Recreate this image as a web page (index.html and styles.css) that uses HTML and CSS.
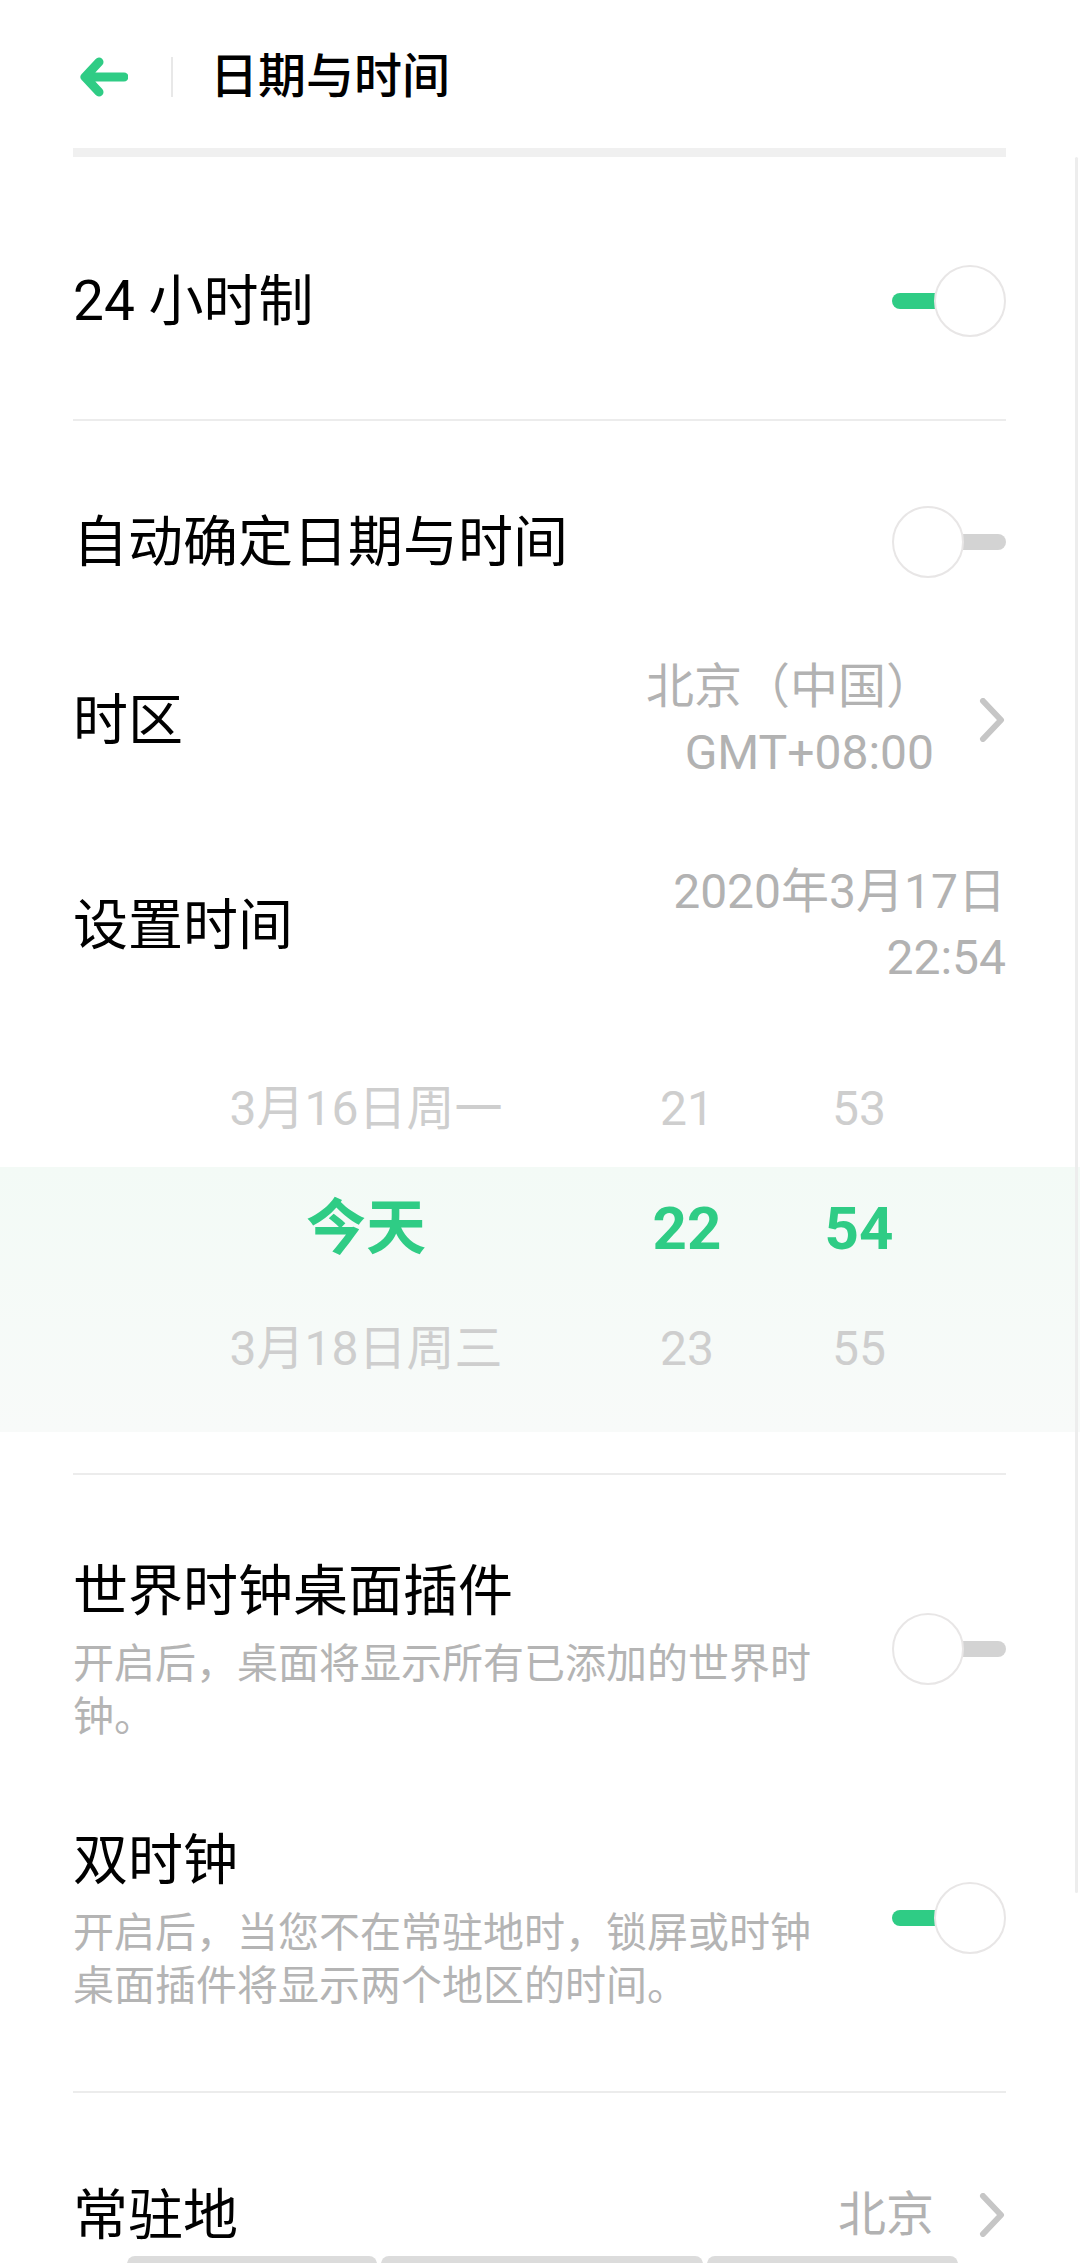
FILE: index.html
```html
<!DOCTYPE html>
<html lang="zh-CN">
<head>
<meta charset="utf-8">
<title>日期与时间</title>
<link rel="stylesheet" href="styles.css">
</head>
<body>
<div class="page">
  <header class="topbar">
    <svg class="back" viewBox="0 0 48 40" aria-hidden="true">
      <path d="M44 20 H5 M19 5 L5 20 L19 35" fill="none" stroke="#2fcc85" stroke-width="9" stroke-linecap="round" stroke-linejoin="round"/>
    </svg>
    <span class="vsep"></span>
    <h1 class="title">日期与时间</h1>
  </header>
  <div class="hbar"></div>

  <section class="row row-24">
    <span class="label">24 小时制</span>
    <span class="switch on"><span class="track"></span><span class="knob"></span></span>
  </section>
  <div class="divider"></div>

  <section class="row row-auto">
    <span class="label">自动确定日期与时间</span>
    <span class="switch off"><span class="knob"></span><span class="track"></span></span>
  </section>

  <section class="row row-tz">
    <span class="label">时区</span>
    <span class="nav">
      <span class="value">北京（中国）<br>GMT+08:00</span>
      <svg class="chev" viewBox="0 0 27 44" aria-hidden="true"><path d="M4 3 L22 22 L4 41" fill="none" stroke="#c6c6c6" stroke-width="6" stroke-linecap="round" stroke-linejoin="round"/></svg>
    </span>
  </section>

  <section class="row row-set">
    <span class="label">设置时间</span>
    <span class="value">2020年3月17日<br>22:54</span>
  </section>

  <section class="picker">
    <div class="prow"><span class="c1">3月16日周一</span><span class="c2">21</span><span class="c3">53</span></div>
    <div class="prow sel"><span class="c1">今天</span><span class="c2">22</span><span class="c3">54</span></div>
    <div class="prow"><span class="c1">3月18日周三</span><span class="c2">23</span><span class="c3">55</span></div>
  </section>
  <div class="divider div-after-picker"></div>

  <section class="item item-world">
    <div class="item-text">
      <div class="item-title">世界时钟桌面插件</div>
      <div class="item-sub">开启后，桌面将显示所有已添加的世界时钟。</div>
    </div>
    <span class="switch off"><span class="knob"></span><span class="track"></span></span>
  </section>

  <section class="item item-dual">
    <div class="item-text">
      <div class="item-title">双时钟</div>
      <div class="item-sub">开启后，当您不在常驻地时，锁屏或时钟桌面插件将显示两个地区的时间。</div>
    </div>
    <span class="switch on"><span class="track"></span><span class="knob"></span></span>
  </section>
  <div class="divider div-home"></div>

  <section class="row row-home">
    <span class="label">常驻地</span>
    <span class="nav">
      <span class="value">北京</span>
      <svg class="chev" viewBox="0 0 27 44" aria-hidden="true"><path d="M4 3 L22 22 L4 41" fill="none" stroke="#c6c6c6" stroke-width="6" stroke-linecap="round" stroke-linejoin="round"/></svg>
    </span>
  </section>

  <div class="scrollbar"></div>
  <div class="bottom-tabs"><span class="tab t1"></span><span class="tab t2"></span><span class="tab t3"></span></div>
</div>
</body>
</html>
```

FILE: styles.css
```css
* { box-sizing: border-box; margin: 0; padding: 0; }

html, body {
  margin: 0;
  background: #ffffff;
}

body {
  font-family: Roboto, "Noto Sans CJK SC", sans-serif;
  color: #000000;
}

.page {
  position: relative;
  width: 1080px;
  height: 2263px;
  overflow: hidden;
  background: #ffffff;
}

/* header */
.topbar {
  height: 148px;
  padding: 6px 0 0 80px;
  display: flex;
  align-items: center;
}
.back { width: 48px; height: 40px; display: block; }
.vsep {
  width: 2px;
  height: 40px;
  background: #e8e8e8;
  margin-left: 43px;
}
.title {
  font-size: 48px;
  font-weight: 500;
  line-height: 64px;
  margin-left: 37px;
  color: #000;
}
.hbar {
  height: 9px;
  background: #f0f0f0;
  margin: 0 74px 0 73px;
}

/* generic rows */
.row {
  margin: 0 74px 0 73px;
  display: flex;
  align-items: center;
  justify-content: space-between;
}
.label {
  font-size: 55px;
  line-height: 64px;
  color: #000;
}
.value {
  font-size: 48px;
  line-height: 66px;
  color: #b2b2b2;
  text-align: right;
}
.nav {
  display: flex;
  align-items: center;
  gap: 45px;
}
.chev { width: 27px; height: 44px; display: block; }

.divider {
  height: 2px;
  background: #ececec;
  margin: 0 74px 0 73px;
}

.row-24 { height: 262px; padding-top: 26px; }
.row-auto { height: 120px; margin-top: 61px; }
.row-tz { height: 140px; margin-top: 48px; }
.row-set { height: 140px; margin-top: 65px; }

/* switches */
.switch {
  display: flex;
  align-items: center;
  flex: none;
}
.switch .knob {
  width: 72px;
  height: 72px;
  border-radius: 50%;
  border: 2px solid #e8e6e6;
  background: #ffffff;
  position: relative;
  z-index: 1;
  flex: none;
}
.switch .track {
  height: 16px;
  border-radius: 8px;
  flex: none;
}
.switch.on .track { width: 60px; background: #2fcc85; }
.switch.on .knob { margin-left: -18px; }
.switch.off .track { width: 60px; background: #d3d3d3; margin-left: -18px; }

/* picker */
.picker {
  margin-top: 45px;
  height: 392px;
  padding-top: 9px;
  background: linear-gradient(to bottom, #ffffff 0, #ffffff 127px, #f3faf6 127px, #f8faf9 100%);
}
.prow {
  display: flex;
  align-items: center;
  height: 120px;
  padding-left: 186px;
  font-size: 48px;
  line-height: 64px;
  color: #cecece;
}
.prow.sel {
  font-size: 60px;
  font-weight: 700;
  color: #2fcc85;
}
.c1 { width: 360px; text-align: center; }
.c2 { width: 160px; margin-left: 61px; text-align: center; }
.c3 { width: 160px; margin-left: 12px; text-align: center; }

.div-after-picker { margin-top: 41px; }

/* items with description */
.item {
  margin: 0 74px 0 73px;
  display: flex;
  align-items: center;
  justify-content: space-between;
}
.item .switch { margin-bottom: 6px; }
.item-world { margin-top: 84px; }
.item-dual { margin-top: 84px; }
.item-text { width: 760px; }
.item-title {
  font-size: 55px;
  line-height: 64px;
  color: #000;
}
.item-sub {
  font-size: 41px;
  line-height: 53px;
  color: #b4b4b4;
  margin-top: 15px;
}

.div-home { margin-top: 78px; }
.row-home { height: 120px; margin-top: 62px; }

/* overlays */
.scrollbar {
  position: absolute;
  left: 1075px;
  top: 157px;
  width: 3px;
  height: 1736px;
  border-radius: 2px;
  background: #ededed;
}
.bottom-tabs {
  position: absolute;
  left: 127px;
  top: 2256px;
  display: flex;
  gap: 4px;
}
.tab {
  height: 12px;
  border-radius: 8px 8px 0 0;
  background: #dcdcdc;
}
.t1 { width: 250px; }
.t2 { width: 322px; }
.t3 { width: 251px; }
```
